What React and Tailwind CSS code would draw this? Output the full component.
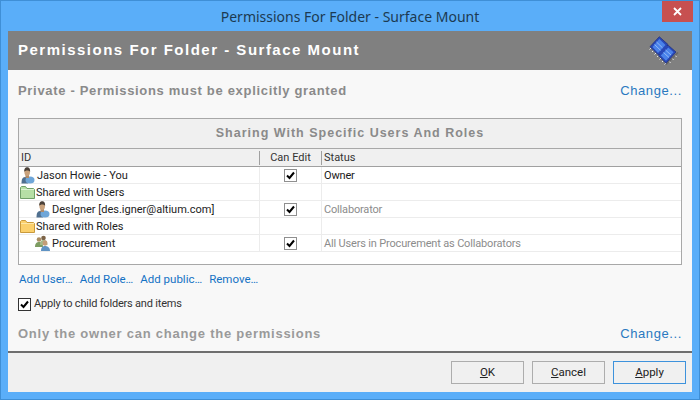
const UI = '"Noto Sans", "Open Sans", sans-serif';
const TABLE = 'Roboto, "Liberation Sans", sans-serif';

const UserIcon = () => (
  <svg width="16" height="17" viewBox="0 0 16 17" className="shrink-0">
    <path d="M1.500 16.500c0-4.500 1-6 3.500-6.500h5c1 .5 1 1 1 1l-3 5.500z" fill="#4f6f8f" />
    <ellipse cx="10" cy="13" rx="4.500" ry="3.500" fill="#6fa6d8" />
    <rect x="5.500" y="8" width="3.500" height="3" fill="#b08a68" />
    <ellipse cx="7.200" cy="5" rx="2.800" ry="4" fill="#c9a27c" />
    <path d="M4.300 5C4 1.500 5.500 .3 7.200 .3S10.400 1.500 10.100 5C9.500 3 5 3 4.300 5z" fill="#4a4038" />
  </svg>
);

const GroupIcon = () => (
  <svg width="16" height="16" viewBox="0 0 16 16" className="shrink-0">
    <circle cx="4" cy="4.500" r="2.300" fill="#a88d62" />
    <path d="M0 12c0-4 2-5 4-5s4 1 4 5z" fill="#7d9c62" />
    <circle cx="8.500" cy="3" r="2.300" fill="#7c6448" />
    <path d="M5 10c0-4 1.500-5 3.500-5s4 1 4 5z" fill="#a6b98a" />
    <ellipse cx="10" cy="8" rx="2.300" ry="2.800" fill="#c49d78" />
    <path d="M6 16c0-4 2-5 4-5s5 1 5 5z" fill="#5f93c4" />
  </svg>
);

const Folder = ({ fill, edge, tab }) => (
  <svg width="15" height="13" viewBox="0 0 15 13" className="shrink-0">
    <path d="M.5 12.500V1.500l1-1h4l1.500 2h6.500l1 1v9z" fill={fill} stroke={edge} />
    <path d="M1 3.500h13" stroke={tab} />
  </svg>
);

const Chip = () => (
  <svg width="30" height="31" viewBox="0 0 30 31">
    <path d="M2 13l-1.500 1.500M4.500 15.500L3 17M7 18l-1.500 1.500M9.500 20.500L8 22M12 23l-1.500 1.500M14.500 25.500L13 27M17 28l-1.500 1.500M20 26l1.500 2M23 23l1.500 2M26 20l1.500 2" stroke="#e6e6e6" strokeWidth="1" fill="none" />
    <path d="M17 29.500l12-12" stroke="#555" strokeWidth="1.500" opacity=".6" />
    <path d="M10.300 1.700L19 9.500l-1 1 1.500 0 7.500 6.500-10 11.300-7.500-7.800 1-1.300-1.500 .3L1 11.700z" fill="#2848b8" stroke="#1b2c7c" strokeWidth=".7" />
    <path d="M10.300 4L16.500 10 9 18 3.500 12zM19.300 12.500L24.500 17.200 17 25.800 11.800 20.600z" fill="#4a82ea" />
    <path d="M7.500 7l6 5.800M5.500 9.500l6 5.800M16.500 15l5.500 5M14.500 17.500l5.500 5" stroke="#a6c6f8" strokeWidth=".8" />
  </svg>
);

const Check = ({ border = 'border-[#8f8f8f]' }) => (
  <span className={`w-[13px] h-[13px] border bg-white flex items-center justify-center shrink-0 ${border}`}>
    <svg width="9" height="9" viewBox="0 0 9 9">
      <path d="M1 4.500l2.500 2.500L8 1.500" fill="none" stroke="#000" strokeWidth="2" />
    </svg>
  </span>
);

const rows = [
  { icon: <UserIcon />, name: 'Jason Howie - You', checked: true, status: 'Owner', statusClass: 'text-[#1a1a1a]' },
  { icon: <Folder fill="#b6dfa6" edge="#6f9f68" tab="#dcf2d2" />, name: 'Shared with Users', folder: true },
  { icon: <UserIcon />, name: 'DesIgner [des.igner@altium.com]', indent: true, checked: true, status: 'Collaborator', statusClass: 'text-[#8c8c8c]' },
  { icon: <Folder fill="#fbd06c" edge="#c99a3c" tab="#fde7a8" />, name: 'Shared with Roles', folder: true },
  { icon: <GroupIcon />, name: 'Procurement', indent: true, checked: true, status: 'All Users in Procurement as Collaborators', statusClass: 'text-[#8c8c8c]' },
];

const DialogButton = ({ letter, rest, active }) => (
  <button className={`w-[73px] h-[23px] border text-[11.500px] text-[#222] bg-[#f0f0f0] ${active ? 'border-[#3d92dc]' : 'border-[#adadad]'}`} style={{ fontFamily: TABLE }}>
    <span className="underline">{letter}</span>{rest}
  </button>
);

export default function App() {
  return (
    <div className="w-[700px] h-[400px] overflow-hidden relative bg-[#5aaef9] border border-[#3f8fd6] flex flex-col" style={{ fontFamily: UI }}>
      <div className="h-[30px] shrink-0 flex items-center justify-center text-[14px] text-[#1c3a52]">
        Permissions For Folder - Surface Mount
      </div>
      <div className="absolute top-0 right-[6px] w-[31px] h-[21px] bg-[#c75050] flex items-center justify-center">
        <svg width="9" height="9" viewBox="0 0 9 9">
          <path d="M1 1l7 7M8 1l-7 7" stroke="#fff" strokeWidth="1.800" />
        </svg>
      </div>

      <div className="mx-[7px] h-[361px] flex flex-col bg-[#f0f0f0]">
        <div className="h-[39px] shrink-0 bg-[#808080] flex items-center justify-between pl-[10px] pr-[13px]">
          <span className="font-bold text-[15px] text-white tracking-[1.5px]" style={{ fontFamily: '"Liberation Sans", sans-serif' }}>
            Permissions For Folder - Surface Mount
          </span>
          <Chip />
        </div>

        <div className="h-[283px] shrink-0 bg-[#f8f8f8] border-b-2 border-b-[#6e6e6e] px-[10px] flex flex-col" style={{ fontFamily: '"Liberation Sans", sans-serif' }}>
          <div className="h-[41px] shrink-0 flex items-center justify-between pt-[1px]">
            <span className="font-bold text-[13px] text-[#8a8a8a] tracking-[0.68px]">Private - Permissions must be explicitly granted</span>
            <span className="text-[13px] text-[#2a78c0] tracking-[0.6px]">Change...</span>
          </div>

          <div className="mt-[7px] h-[147px] shrink-0 border border-[#a8a8a8] bg-white flex flex-col">
            <div className="h-[30px] shrink-0 bg-[#f0f0f0] border-b border-[#a8a8a8] flex items-center justify-center font-bold text-[12.500px] text-[#8a8a8a] tracking-[1px]">
              Sharing With Specific Users And Roles
            </div>
            <div className="h-[18px] shrink-0 bg-[#f0f0f0] border-b border-[#a0a0a0] flex items-center text-[11px] text-[#333]" style={{ fontFamily: TABLE }}>
              <span className="w-[240px] pl-[2px] pt-[1px]">ID</span>
              <span className="w-[62px] h-[14px] border-l border-[#a0a0a0] flex items-center justify-center pt-[1px]">Can Edit</span>
              <span className="h-[14px] border-l border-[#a0a0a0] flex items-center pl-[2px] pt-[1px]">Status</span>
            </div>
            {rows.map((r) => (
              <div key={r.name} className="h-[17px] shrink-0 border-b border-[#ececec] flex items-center text-[11px]" style={{ fontFamily: TABLE }}>
                <div className={`w-[240px] flex items-center text-[#222] gap-[1px] ${r.indent ? 'pl-[16px]' : 'pl-[1px]'}`}>
                  {r.icon}
                  <span className="whitespace-nowrap pt-[2px]">{r.name}</span>
                </div>
                <div className="w-[62px] h-full border-l border-[#ececec] flex items-center justify-center">
                  {r.checked && <Check />}
                </div>
                <div className={`h-full border-l border-[#ececec] flex items-center pl-[2px] pt-[2px] whitespace-nowrap tracking-[-0.17px] ${r.statusClass || ''}`}>
                  {r.status}
                </div>
              </div>
            ))}
          </div>

          <div className="mt-[6px] h-[17px] shrink-0 flex items-center gap-[7px] pl-[1px] text-[11.500px] text-[#1472c4]" style={{ fontFamily: TABLE }}>
            <span>Add User…</span>
            <span>Add Role…</span>
            <span>Add public…</span>
            <span>Remove…</span>
          </div>

          <div className="mt-[9px] h-[14px] shrink-0 flex items-center gap-[3px] text-[11px] text-[#333] tracking-[-0.2px]" style={{ fontFamily: TABLE }}>
            <Check border="border-[#333]" />
            <span>Apply to child folders and items</span>
          </div>

          <div className="mt-[13px] flex items-center justify-between">
            <span className="font-bold text-[13px] text-[#9a9a9a] tracking-[0.75px]">Only the owner can change the permissions</span>
            <span className="text-[13px] text-[#2a78c0] tracking-[0.6px]">Change...</span>
          </div>
        </div>

        <div className="flex-1 flex items-center justify-end gap-[8px] pr-[6px]">
          <DialogButton letter="O" rest="K" />
          <DialogButton letter="C" rest="ancel" />
          <DialogButton letter="A" rest="pply" active />
        </div>
      </div>
    </div>
  );
}
